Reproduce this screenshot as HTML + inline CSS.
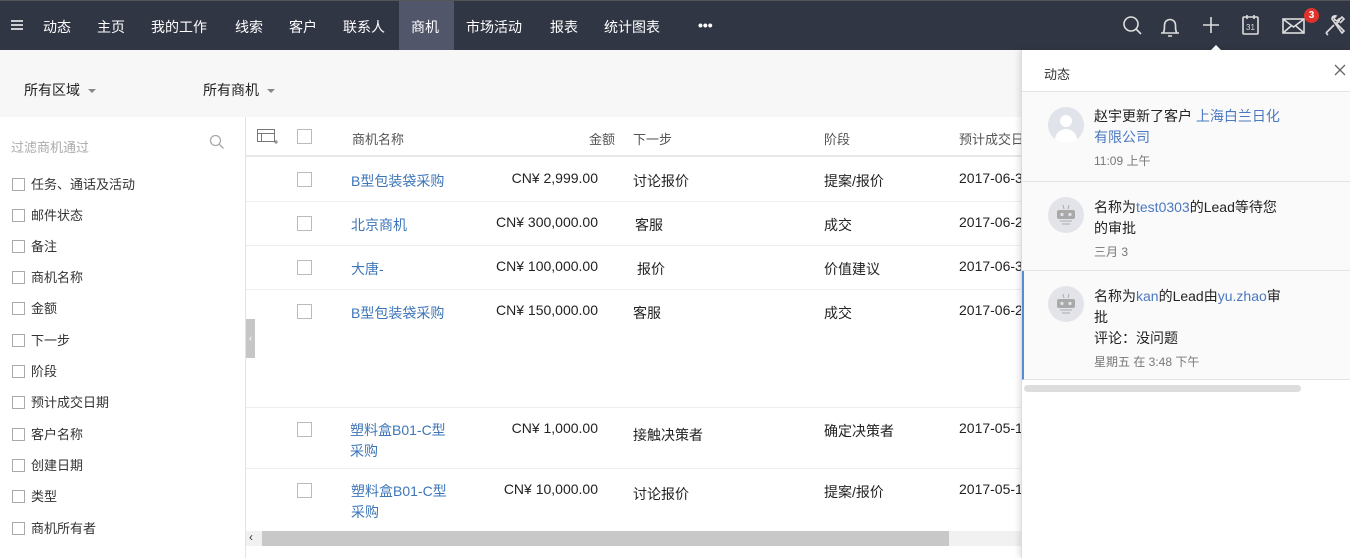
<!DOCTYPE html>
<html><head><meta charset="utf-8"><style>
*{margin:0;padding:0;box-sizing:border-box}
body{width:1350px;height:558px;overflow:hidden;font-family:"Liberation Sans","Noto Sans CJK SC",sans-serif;font-size:14px;color:#222;background:#fff;position:relative}
.nav{position:absolute;left:0;top:0;width:1350px;height:50px;background:#313644;color:#fff;border-top:1px solid #555}
.nav span{position:absolute;top:16px;font-size:14px}
.act{position:absolute;left:399px;top:0;width:55px;height:50px;background:#51566a}
.fbar{position:absolute;left:0;top:50px;width:1350px;height:67px;background:#f7f7f7}
.fbar span{position:absolute;top:30px;font-size:14px}
.tri{display:inline-block;border-left:4px solid transparent;border-right:4px solid transparent;border-top:4px solid #888;margin-left:8px;vertical-align:middle}
.side{position:absolute;left:0;top:117px;width:246px;height:441px;background:#fff;border-right:1px solid #e3e3e3}
.side .ph{position:absolute;left:11px;top:20px;color:#aaa;font-size:13px}
.side .it{position:absolute;left:12px;font-size:13px;color:#333}
.cb{display:inline-block;width:13px;height:13px;border:1px solid #aaa;vertical-align:-2px;margin-right:6px;background:#fff}
.cb2{position:absolute;width:15px;height:15px;border:1px solid #bbb;background:#fff}
.th{position:absolute;top:117px;left:246px;width:800px;height:40px;border-bottom:2px solid #e8e8e8;color:#555;font-size:13px}
.row{position:absolute;left:246px;width:800px;border-bottom:1px solid #eee}
.t{position:absolute;font-size:14px}
.lk{color:#3d76b8}
.amt{text-align:right;width:150px;left:202px}
.panel{position:absolute;left:1021px;top:50px;width:329px;height:508px;background:#fff;border-left:1px solid #ddd;box-shadow:-2px 0 6px rgba(0,0,0,.12)}
.ph2{height:42px;border-bottom:1px solid #e4e4e4;padding:14px 0 0 22px;font-size:13px;color:#333}
.n{position:absolute;left:0;width:329px;border-bottom:1px solid #e4e4e4;background:#fafafa}
.av{position:absolute;left:26px;width:36px;height:36px;border-radius:50%;background:#e3e4e9;overflow:hidden}
.nt{position:absolute;left:72px;width:230px;white-space:nowrap;font-size:14px;line-height:21px;color:#222}
.tm{font-size:12px;color:#777;line-height:26px}
.bl{color:#4a78c2}
</style></head><body>
<div class="nav">
<div class="act"></div>
<svg style="position:absolute;left:11px;top:19px" width="12" height="10" stroke="#fff" stroke-width="1.4"><path d="M0 1h12M0 5h12M0 9h12"/></svg>
<span style="left:43px">动态</span><span style="left:97px">主页</span><span style="left:151px">我的工作</span><span style="left:235px">线索</span><span style="left:289px">客户</span><span style="left:343px">联系人</span><span style="left:411px">商机</span><span style="left:466px">市场活动</span><span style="left:550px">报表</span><span style="left:604px">统计图表</span><span style="left:698px;font-weight:bold">•••</span>
<svg style="position:absolute;left:1120px;top:12px" width="230" height="38" fill="none" stroke="#ddd" stroke-width="1.6">
<circle cx="11" cy="11" r="7"/><path d="M16 16l5 5"/>
<path d="M41 20h18M43 20c1.5-1.5 1.5-4 1.5-8a5.5 5.5 0 0111 0c0 4 0 6.5 1.5 8M48 23h4"/>
<path d="M83 12h16M91 4v16"/>
<rect x="123" y="4" width="15" height="17" rx="1"/><path d="M127 2v4M134 2v4"/><text x="126" y="17" font-size="8" fill="#ddd" stroke="none">31</text>
<rect x="163" y="6" width="21" height="14"/><path d="M163 6l10.5 8 10.5-8M163 20l8-7M184 20l-8-7"/>
<path d="M206 20l8-8M218 8l4-4 2 2-4 4M212 6a3 3 0 014-3l-2 2 1 2 2 1 2-2a3 3 0 01-3 4l8 8-2 2zM206 20l2 2"/>
<path d="M90 38l6-6 6 6z" fill="#fff" stroke="none"/>
</svg>
<div style="position:absolute;left:1304px;top:7px;width:15px;height:15px;border-radius:50%;background:#e0322b;color:#fff;font-size:10px;text-align:center;line-height:15px;font-weight:bold">3</div>
</div>
<div class="fbar"><span style="left:24px">所有区域<i class="tri"></i></span><span style="left:203px">所有商机<i class="tri"></i></span></div>
<div class="side">
<div class="ph">过滤商机通过</div>
<svg style="position:absolute;left:209px;top:17px" width="16" height="16" fill="none" stroke="#aaa" stroke-width="1.3"><circle cx="6.5" cy="6.5" r="5"/><path d="M10 10l4.5 4.5"/></svg>
<div class="it" style="top:57px"><i class="cb"></i>任务、通话及活动</div>
<div class="it" style="top:88px"><i class="cb"></i>邮件状态</div>
<div class="it" style="top:119px"><i class="cb"></i>备注</div>
<div class="it" style="top:150px"><i class="cb"></i>商机名称</div>
<div class="it" style="top:181px"><i class="cb"></i>金额</div>
<div class="it" style="top:213px"><i class="cb"></i>下一步</div>
<div class="it" style="top:244px"><i class="cb"></i>阶段</div>
<div class="it" style="top:275px"><i class="cb"></i>预计成交日期</div>
<div class="it" style="top:307px"><i class="cb"></i>客户名称</div>
<div class="it" style="top:338px"><i class="cb"></i>创建日期</div>
<div class="it" style="top:369px"><i class="cb"></i>类型</div>
<div class="it" style="top:401px"><i class="cb"></i>商机所有者</div>
</div>
<div style="position:absolute;left:246px;top:319px;width:9px;height:39px;background:#c6c6c6;color:#fff;font-size:9px;line-height:39px;text-align:center">‹</div>
<div class="th">
<svg style="position:absolute;left:11px;top:12px" width="22" height="16" fill="none" stroke="#777"><rect x=".5" y=".5" width="17" height="12"/><path d="M.5 4.5h17M4.5 4.5v8M17 13h4M19 11v4"/></svg>
<i class="cb2" style="left:51px;top:12px"></i>
<span class="t" style="left:106px;top:12px;font-size:13px">商机名称</span>
<span class="t amt" style="top:12px;font-size:13px;left:219px">金额</span>
<span class="t" style="left:387px;top:12px;font-size:13px">下一步</span>
<span class="t" style="left:578px;top:12px;font-size:13px">阶段</span>
<span class="t" style="left:713px;top:12px;font-size:13px">预计成交日</span>
</div>
<div class="row" style="top:157px;height:45px"><i class="cb2" style="left:51px;top:15px"></i><span class="t lk" style="left:105px;top:14px">B型包装袋采购</span><span class="t amt" style="top:13px">CN¥ 2,999.00</span><span class="t" style="left:387px;top:14px">讨论报价</span><span class="t" style="left:578px;top:14px">提案/报价</span><span class="t" style="left:713px;top:13px">2017-06-3</span></div>
<div class="row" style="top:202px;height:44px"><i class="cb2" style="left:51px;top:14px"></i><span class="t lk" style="left:105px;top:13px">北京商机</span><span class="t amt" style="top:12px">CN¥ 300,000.00</span><span class="t" style="left:389px;top:13px">客服</span><span class="t" style="left:578px;top:13px">成交</span><span class="t" style="left:713px;top:12px">2017-06-2</span></div>
<div class="row" style="top:246px;height:44px"><i class="cb2" style="left:51px;top:14px"></i><span class="t lk" style="left:105px;top:13px">大唐-</span><span class="t amt" style="top:12px">CN¥ 100,000.00</span><span class="t" style="left:391px;top:13px">报价</span><span class="t" style="left:578px;top:13px">价值建议</span><span class="t" style="left:713px;top:12px">2017-06-3</span></div>
<div class="row" style="top:290px;height:118px"><i class="cb2" style="left:51px;top:14px"></i><span class="t lk" style="left:105px;top:13px">B型包装袋采购</span><span class="t amt" style="top:12px">CN¥ 150,000.00</span><span class="t" style="left:387px;top:13px">客服</span><span class="t" style="left:578px;top:13px">成交</span><span class="t" style="left:713px;top:12px">2017-06-2</span></div>
<div class="row" style="top:408px;height:61px"><i class="cb2" style="left:51px;top:14px"></i><span class="t lk" style="left:104px;top:12px;line-height:21px">塑料盒B01-C型<br>采购</span><span class="t amt" style="top:12px">CN¥ 1,000.00</span><span class="t" style="left:387px;top:17px">接触决策者</span><span class="t" style="left:578px;top:13px">确定决策者</span><span class="t" style="left:713px;top:12px">2017-05-1</span></div>
<div class="row" style="top:469px;height:62px;border:none"><i class="cb2" style="left:51px;top:14px"></i><span class="t lk" style="left:105px;top:12px;line-height:21px">塑料盒B01-C型<br>采购</span><span class="t amt" style="top:12px">CN¥ 10,000.00</span><span class="t" style="left:387px;top:15px">讨论报价</span><span class="t" style="left:578px;top:13px">提案/报价</span><span class="t" style="left:713px;top:12px">2017-05-1</span></div>
<div style="position:absolute;left:246px;top:531px;width:775px;height:15px;background:#f1f1f1"><div style="position:absolute;left:16px;top:0;width:687px;height:15px;background:#c8c8c8"></div><span style="position:absolute;left:3px;top:-1px;font-size:12px;color:#333">‹</span></div>
<div class="panel">
<div class="ph2">动态</div>
<svg style="position:absolute;right:4px;top:14px" width="12" height="12" stroke="#666" stroke-width="1.3"><path d="M1 1l10 10M11 1L1 11"/></svg>
<div class="n" style="top:42px;height:90px"><div class="av" style="top:15px;background:#e1e3ea"><div style="position:absolute;left:12px;top:8px;width:12px;height:12px;border-radius:50%;background:#fff"></div><div style="position:absolute;left:7px;top:22px;width:22px;height:14px;border-radius:11px 11px 0 0;background:#fff"></div></div><div class="nt" style="top:14px">赵宇更新了客户 <span class="bl">上海白兰日化<br>有限公司</span><div class="tm">11:09 上午</div></div></div>
<div class="n" style="top:132px;height:89px"><div class="av" style="top:15px"><svg width="36" height="36"><path d="M15 8l1 4M21 8l-1 4" stroke="#aaa"/><rect x="9" y="13" width="18" height="9" rx="2" fill="#a9a9a9"/><circle cx="14" cy="17.5" r="1.6" fill="#e3e4e9"/><circle cx="22" cy="17.5" r="1.6" fill="#e3e4e9"/><path d="M12 24h12M14 27h8" stroke="#aaa"/></svg></div><div class="nt" style="top:15px">名称为<span class="bl">test0303</span>的Lead等待您<br>的审批<div class="tm">三月 3</div></div></div>
<div class="n" style="top:221px;height:109px;border-left:2px solid #5a8ad6"><div class="av" style="top:15px;left:24px"><svg width="36" height="36"><path d="M15 8l1 4M21 8l-1 4" stroke="#aaa"/><rect x="9" y="13" width="18" height="9" rx="2" fill="#a9a9a9"/><circle cx="14" cy="17.5" r="1.6" fill="#e3e4e9"/><circle cx="22" cy="17.5" r="1.6" fill="#e3e4e9"/><path d="M12 24h12M14 27h8" stroke="#aaa"/></svg></div><div class="nt" style="top:15px;left:70px">名称为<span class="bl">kan</span>的Lead由<span class="bl">yu.zhao</span>审<br>批<br>评论：没问题<div class="tm">星期五 在 3:48 下午</div></div></div>
<div style="position:absolute;left:2px;top:335px;width:277px;height:7px;border-radius:4px;background:#ddd"></div>
</div>
</body></html>
